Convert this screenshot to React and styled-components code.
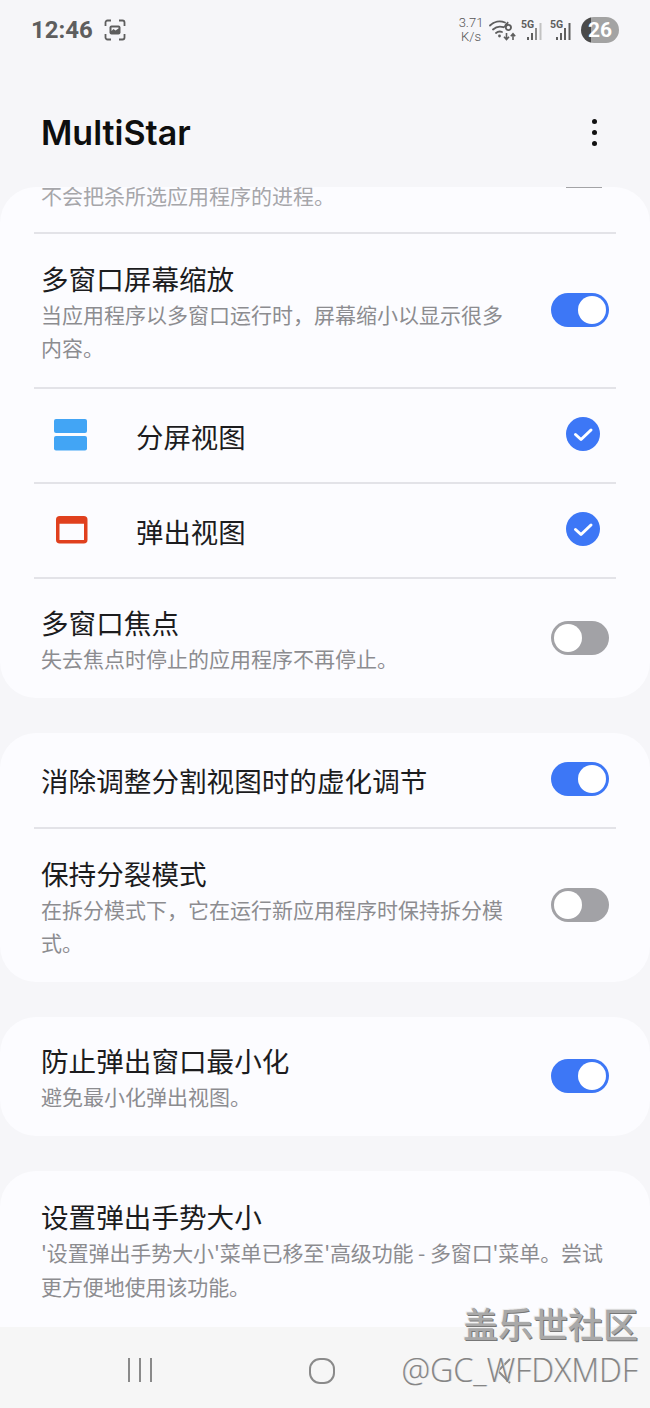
import React from 'react'
import styled, { createGlobalStyle } from 'styled-components'

const CJK = `"Noto Sans CJK SC", "Noto Sans", sans-serif`

const GlobalStyle = createGlobalStyle`
  html, body {
    margin: 0;
    padding: 0;
    background: #f6f6f9;
  }
  * {
    box-sizing: border-box;
  }
`
const Page = styled.div`
  position: relative;
  width: 650px;
  height: 1408px;
  display: flex;
  flex-direction: column;
  overflow: hidden;
  background: #f6f6f9;
  font-family: ${CJK};
`
const StatusBar = styled.div`
  height: 60px;
  padding: 0 31px 0 31px;
  display: flex;
  align-items: center;
  justify-content: space-between;
`
const StatusLeft = styled.div`
  display: flex;
  align-items: center;
  gap: 11px;
`
const Clock = styled.span`
  font-family: Roboto, sans-serif;
  font-size: 24px;
  font-weight: 700;
  color: #5e5e5e;
`
const StatusRight = styled.div`
  display: flex;
  align-items: center;
`
const Speed = styled.div`
  width: 26px;
  margin-right: 5px;
  font-family: Roboto, sans-serif;
  font-size: 13px;
  font-weight: 300;
  line-height: 14px;
  text-align: center;
  color: #555;
`
const Battery = styled.div`
  width: 38px;
  height: 26px;
  margin-left: 7px;
  border-radius: 13px;
  background: linear-gradient(90deg, #4a4a4a 0 10px, #a3a3a3 10px);
  color: #fff;
  font-family: Roboto, sans-serif;
  font-size: 21px;
  font-weight: 700;
  line-height: 26px;
  text-align: right;
  padding-right: 7px;
`
const AppBar = styled.div`
  height: 127px;
  padding: 18px 42px 0 41px;
  display: flex;
  align-items: center;
  justify-content: space-between;
`
const Title = styled.h1`
  margin: 0;
  font-family: Inter, sans-serif;
  font-size: 34px;
  font-weight: 600;
  color: #0e0e0e;
`
const MoreButton = styled.div`
  display: flex;
  flex-direction: column;
  gap: 6px;
  margin-right: 11px;
`
const Dot = styled.span`
  width: 5px;
  height: 5px;
  border-radius: 50%;
  background: #111;
`
const Scroll = styled.div`
  flex: 1;
  min-height: 0;
  overflow: hidden;
  display: flex;
  flex-direction: column;
  gap: 35px;
`
const Card = styled.section`
  flex: none;
  min-height: ${p => p.$minH || 0}px;
  background: #fcfcff;
  border-radius: 36px;
`
const Divider = styled.div`
  height: 2px;
  margin: 0 34px;
  background: #e3e3e8;
`
const Row = styled.div`
  height: ${p => p.$h}px;
  padding: 0 41px 0 41px;
  display: flex;
  align-items: center;
  justify-content: space-between;
`
const ClippedRow = styled.div`
  height: 45px;
  padding: 0 41px 0 41px;
  display: flex;
  align-items: flex-start;
  justify-content: space-between;
  font-size: 21px;
  line-height: 16px;
  color: #a6a6aa;
`
const ToggleEdge = styled.span`
  width: 36px;
  height: 1px;
  margin-right: 7px;
  background: #a3a3a6;
`
const Texts = styled.div`
  width: ${p => p.$w || 466}px;
  padding-top: 2px;
`
const RowTitle = styled.div`
  font-size: 27.6px;
  line-height: 38px;
  color: #1c1c1e;
`
const RowSub = styled.div`
  margin-top: 1px;
  font-size: 21px;
  line-height: 33.5px;
  letter-spacing: ${p => (p.$tight ? '-0.1px' : '0')};
  color: #8c8c90;
`
const Toggle = styled.span`
  flex: none;
  width: 58px;
  height: 34px;
  margin-bottom: 2px;
  padding: 3px;
  border-radius: 17px;
  display: flex;
  justify-content: ${p => (p.$on ? 'flex-end' : 'flex-start')};
  background: ${p => (p.$on ? '#3d77f6' : '#a2a2a6')};
`
const Knob = styled.span`
  width: 28px;
  height: 28px;
  border-radius: 50%;
  background: #fff;
`
const ViewRow = styled.div`
  height: 93px;
  padding: 0 50px 3px 54px;
  display: flex;
  align-items: center;
`
const ViewIcon = styled.span`
  width: 82px;
  margin-top: 2px;
  display: flex;
`
const ViewLabel = styled.span`
  flex: 1;
  margin-top: 3px;
  font-size: 27.4px;
  color: #1c1c1e;
`
const Footer = styled.div`
  height: 81px;
  flex: none;
  background: #f6f6f6;
  position: relative;
`
const NavIcons = styled.div`
  height: 100%;
  padding: 30px 0 0 127px;
  display: grid;
  grid-template-columns: 181px 187px auto;
  align-items: start;
`
const Watermark = styled.div`
  position: absolute;
  right: 12px;
  top: 1300px;
  display: flex;
  flex-direction: column;
  align-items: flex-end;
  pointer-events: none;
`
const WatermarkTitle = styled.div`
  font-size: 35px;
  line-height: 46px;
  font-weight: 500;
  color: #a9a9a9;
  text-shadow: 1px 1px 0 #777, -1px -1px 0 #eee;
`
const WatermarkUser = styled.div`
  margin-top: 2px;
  font-family: "Open Sans", sans-serif;
  font-size: 32.2px;
  line-height: 44px;
  font-weight: 300;
  color: #858585;
  text-shadow: 1px 0 0 #ddd;
`

const ScreenshotIcon = () => (
  <svg width="22" height="22" viewBox="0 0 22 22" fill="none">
    <path d="M1.5 7V3.5a2 2 0 0 1 2-2H7M15 1.5h3.5a2 2 0 0 1 2 2V7M20.5 15v3.5a2 2 0 0 1-2 2H15M7 20.5H3.5a2 2 0 0 1-2-2V15" stroke="#5e5e5e" strokeWidth="1.8" />
    <rect x="5.5" y="6.5" width="11" height="9" rx="2" fill="#5e5e5e" />
    <path d="M7.5 12l2-2 2 1.5 3-2v-1h-7z" fill="#f6f6f9" />
  </svg>
)

const WifiIcon = () => (
  <svg width="27" height="24" viewBox="0 0 27 24" fill="none">
    <path d="M1 7.5C5 3.5 11 2.5 16 4.5M4 11.5C7 8.7 11 8 14.5 9.2M7 15c1.8-1.5 4-1.8 6-1" stroke="#5e5e5e" strokeWidth="1.8" strokeLinecap="round" />
    <circle cx="10.5" cy="18" r="1.4" fill="#5e5e5e" />
    <path d="M15.5 9.5c.6-2.6 2-4 3.8-5.2M22 9.5a2.6 2.6 0 1 1-5.2 0 2.6 2.6 0 0 1 5.2 0z" stroke="#5e5e5e" strokeWidth="1.9" />
    <path d="M17.5 15v6M15 18.8l2.5 2.7 2.5-2.7" stroke="#5e5e5e" strokeWidth="1.6" />
    <path d="M24 22v-6M21.8 18.2l2.2-2.5 2.2 2.5" stroke="#5e5e5e" strokeWidth="1.6" />
  </svg>
)

const SignalIcon = ({ faded }) => {
  const tail = faded ? '#c2c2c2' : '#5e5e5e'
  return (
    <svg width="24" height="24" viewBox="0 0 24 24" style={{ marginLeft: 5 }}>
      <text x="0" y="9.5" fontFamily="Roboto, sans-serif" fontSize="10.5" fontWeight="700" fill="#5e5e5e">5G</text>
      <rect x="6" y="19" width="2" height="3" fill="#5e5e5e" />
      <rect x="10" y="15" width="2" height="7" fill="#5e5e5e" />
      <rect x="14" y="10" width="2" height="12" fill={faded ? '#8a8a8a' : '#5e5e5e'} />
      <rect x="18.5" y="5" width="2" height="17" fill={tail} />
    </svg>
  )
}

const SplitIcon = () => (
  <svg width="33" height="32" viewBox="0 0 33 32">
    <rect x="0" y="0" width="33" height="14" rx="2" fill="#42a5f5" />
    <rect x="0" y="17" width="33" height="14.5" rx="2" fill="#42a5f5" />
  </svg>
)

const PopupIcon = () => (
  <svg width="33" height="28" viewBox="0 0 33 28" fill="none" style={{ marginLeft: 2 }}>
    <rect x="1.75" y="1.75" width="28" height="24" rx="2" stroke="#e0401e" strokeWidth="3.5" />
    <rect x="1.75" y="1.75" width="28" height="6" fill="#e0401e" />
  </svg>
)

const CheckIcon = () => (
  <svg width="34" height="34" viewBox="0 0 34 34" style={{ flex: 'none' }}>
    <circle cx="17" cy="17" r="17" fill="#3d77f6" />
    <path d="M9.5 17.5l5.5 5 10-9.5" fill="none" stroke="#fff" strokeWidth="3" strokeLinecap="round" strokeLinejoin="round" />
  </svg>
)

const RecentsIcon = () => (
  <svg width="26" height="26" viewBox="0 0 26 26">
    <path d="M2 1v24M13 1v24M24 1v24" stroke="#8a8a8a" strokeWidth="2" />
  </svg>
)

const HomeIcon = () => (
  <svg width="28" height="28" viewBox="0 0 28 28" fill="none">
    <rect x="2" y="2" width="24" height="24" rx="10" stroke="#8a8a8a" strokeWidth="2" />
  </svg>
)

const BackIcon = () => (
  <svg width="18" height="28" viewBox="0 0 18 28" fill="none">
    <path d="M15 2L3 14l12 12" stroke="#8a8a8a" strokeWidth="2" />
  </svg>
)

function App() {
  return (
    <Page>
      <GlobalStyle />
      <StatusBar>
        <StatusLeft>
          <Clock>12:46</Clock>
          <ScreenshotIcon />
        </StatusLeft>
        <StatusRight>
          <Speed>3.71<br />K/s</Speed>
          <WifiIcon />
          <SignalIcon faded />
          <SignalIcon />
          <Battery>26</Battery>
        </StatusRight>
      </StatusBar>
      <AppBar>
        <Title>MultiStar</Title>
        <MoreButton>
          <Dot />
          <Dot />
          <Dot />
        </MoreButton>
      </AppBar>
      <Scroll>
        <Card>
          <ClippedRow>
            <span>不会把杀所选应用程序的进程。</span>
            <ToggleEdge />
          </ClippedRow>
          <Divider />
          <Row $h={153}>
            <Texts>
              <RowTitle>多窗口屏幕缩放</RowTitle>
              <RowSub>当应用程序以多窗口运行时，屏幕缩小以显示很多内容。</RowSub>
            </Texts>
            <Toggle $on><Knob /></Toggle>
          </Row>
          <Divider />
          <ViewRow>
            <ViewIcon><SplitIcon /></ViewIcon>
            <ViewLabel>分屏视图</ViewLabel>
            <CheckIcon />
          </ViewRow>
          <Divider />
          <ViewRow>
            <ViewIcon><PopupIcon /></ViewIcon>
            <ViewLabel>弹出视图</ViewLabel>
            <CheckIcon />
          </ViewRow>
          <Divider />
          <Row $h={119}>
            <Texts>
              <RowTitle>多窗口焦点</RowTitle>
              <RowSub>失去焦点时停止的应用程序不再停止。</RowSub>
            </Texts>
            <Toggle><Knob /></Toggle>
          </Row>
        </Card>
        <Card>
          <Row $h={94}>
            <RowTitle>消除调整分割视图时的虚化调节</RowTitle>
            <Toggle $on><Knob /></Toggle>
          </Row>
          <Divider />
          <Row $h={153}>
            <Texts>
              <RowTitle>保持分裂模式</RowTitle>
              <RowSub>在拆分模式下，它在运行新应用程序时保持拆分模式。</RowSub>
            </Texts>
            <Toggle><Knob /></Toggle>
          </Row>
        </Card>
        <Card>
          <Row $h={119}>
            <Texts>
              <RowTitle>防止弹出窗口最小化</RowTitle>
              <RowSub>避免最小化弹出视图。</RowSub>
            </Texts>
            <Toggle $on><Knob /></Toggle>
          </Row>
        </Card>
        <Card $minH={200}>
          <Row $h={156}>
            <Texts $w={568}>
              <RowTitle>设置弹出手势大小</RowTitle>
              <RowSub $tight>'设置弹出手势大小'菜单已移至'高级功能 - 多窗口'菜单。尝试更方便地使用该功能。</RowSub>
            </Texts>
          </Row>
        </Card>
      </Scroll>
      <Footer>
        <NavIcons>
          <RecentsIcon />
          <HomeIcon />
          <BackIcon />
        </NavIcons>
      </Footer>
      <Watermark>
        <WatermarkTitle>盖乐世社区</WatermarkTitle>
        <WatermarkUser>@GC_WFDXMDF</WatermarkUser>
      </Watermark>
    </Page>
  )
}

export default App
